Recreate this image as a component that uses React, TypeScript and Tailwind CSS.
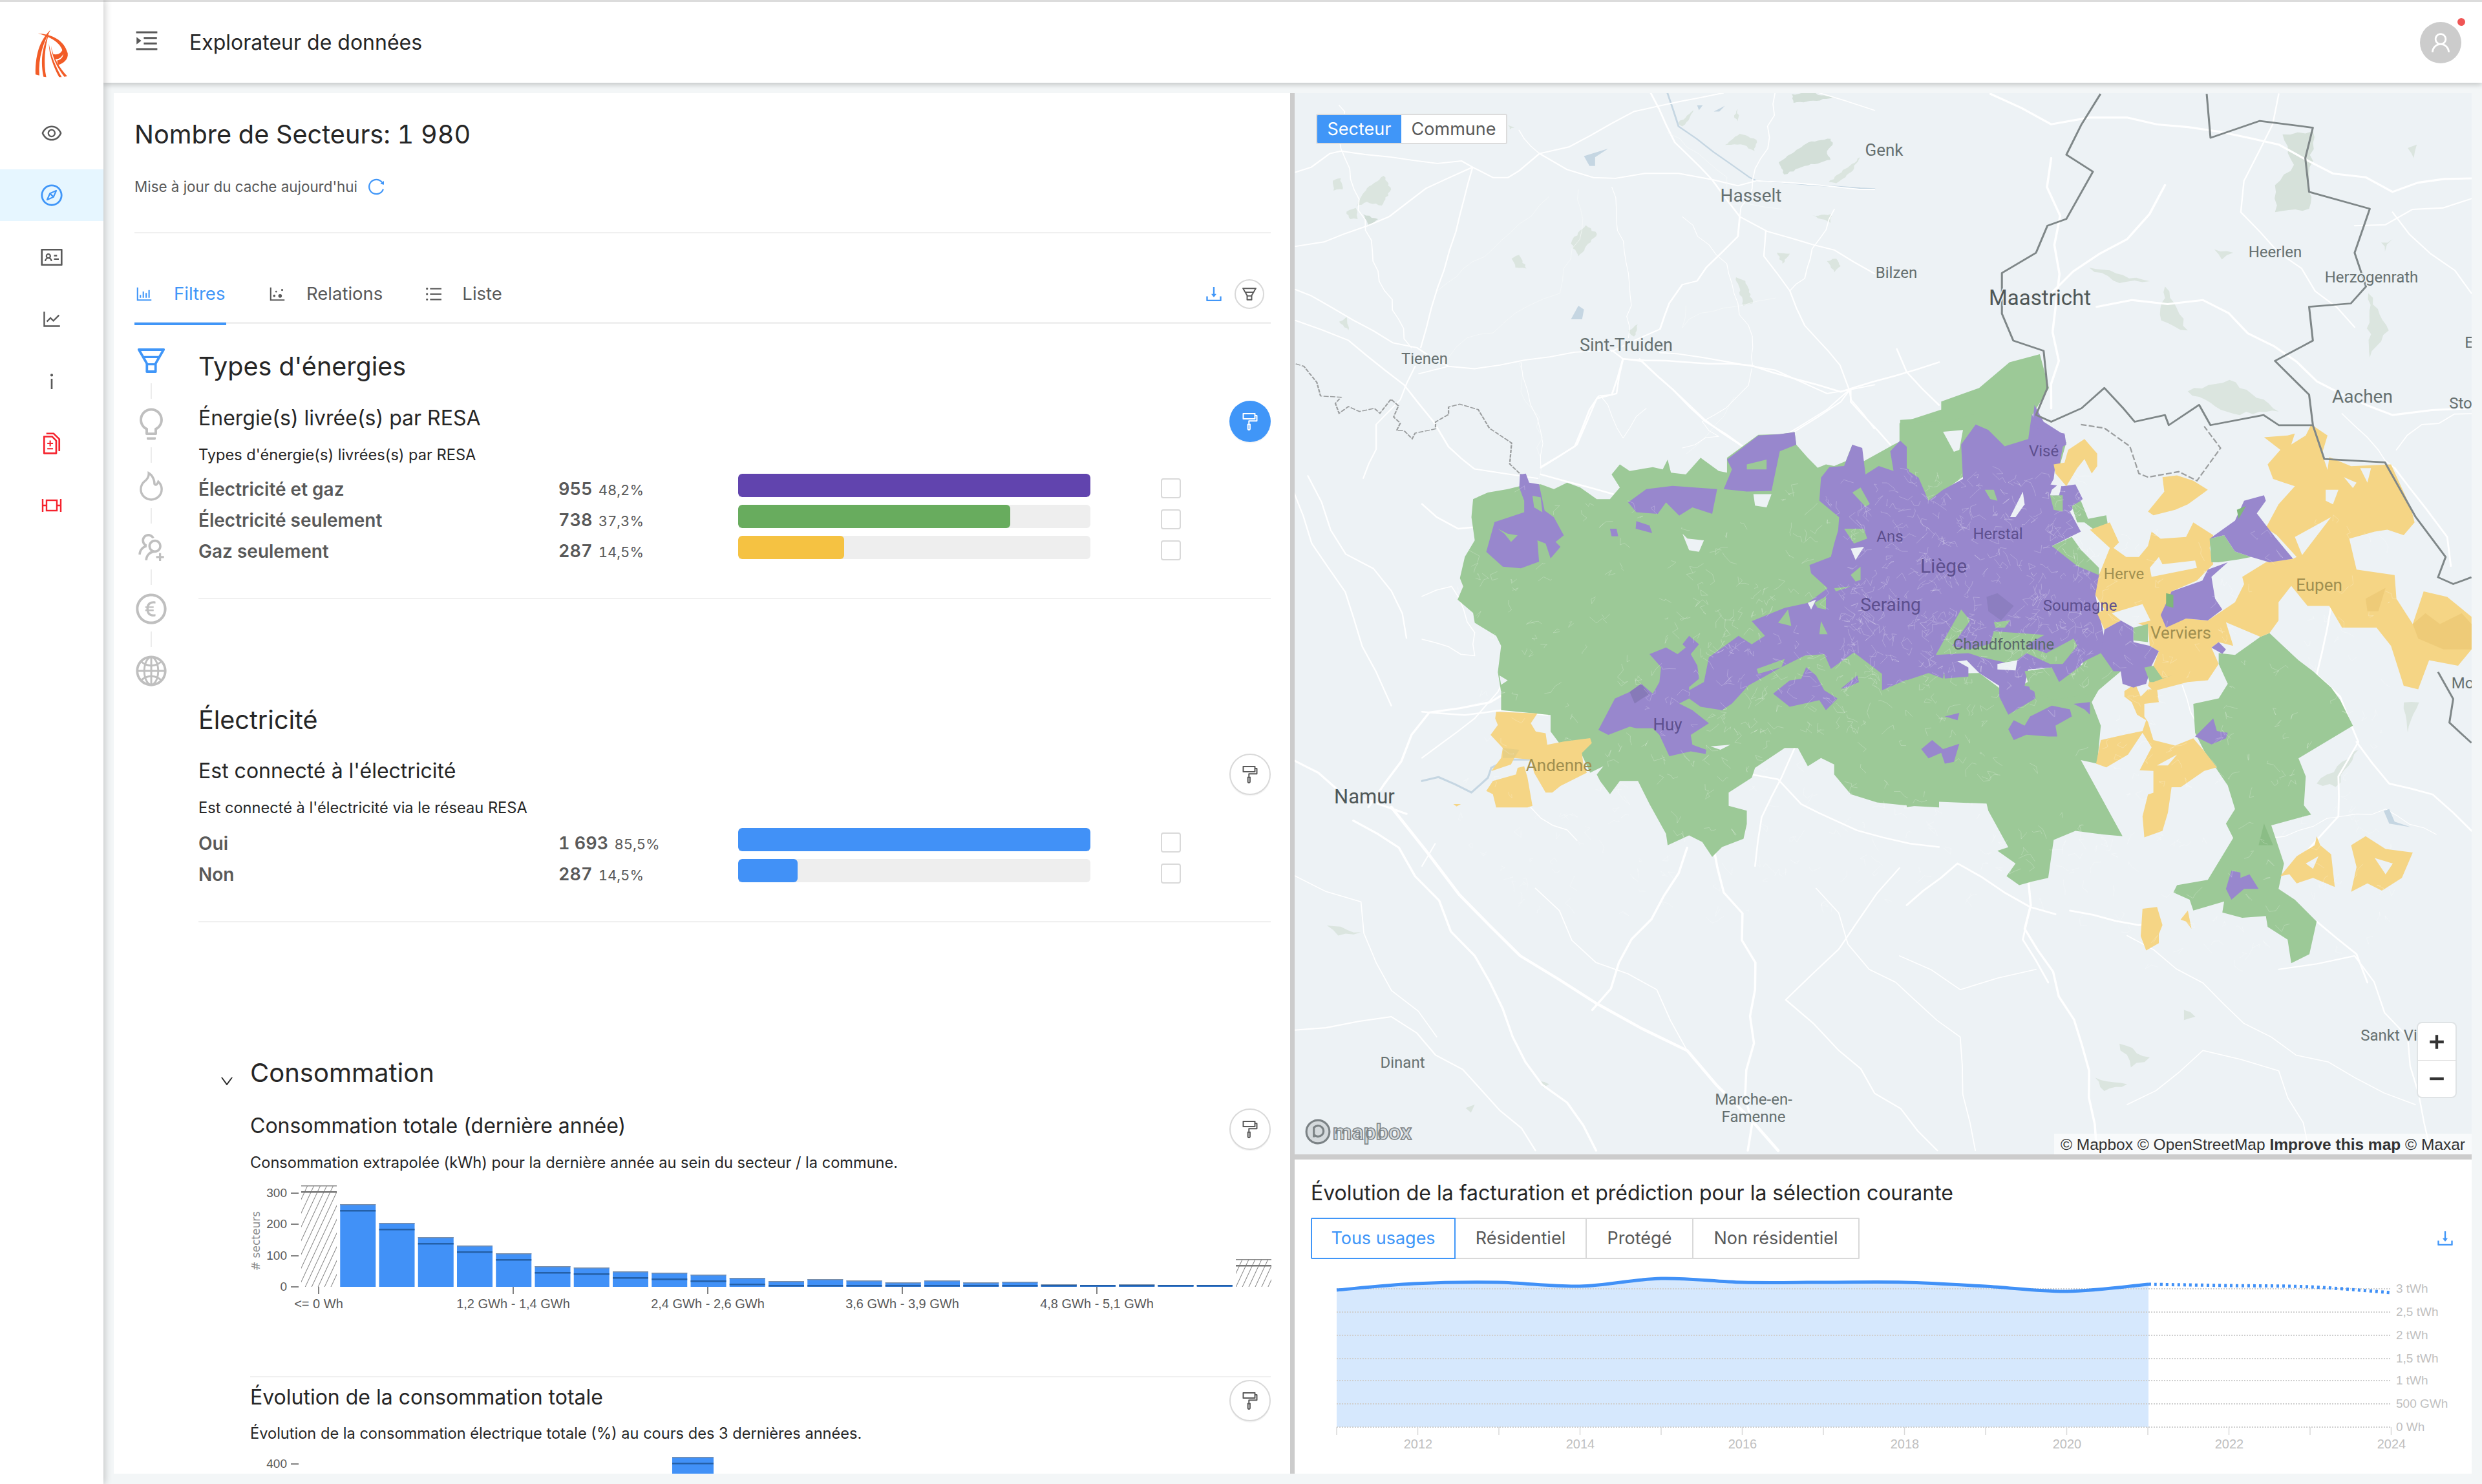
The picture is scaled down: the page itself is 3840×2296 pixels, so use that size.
import React from "react";
import {
  AiOutlineEye,
  AiOutlineCompass,
  AiOutlineIdcard,
  AiOutlineLineChart,
  AiOutlineInfo,
  AiOutlineDiff,
  AiOutlineMenuUnfold,
  AiOutlineUser,
  AiOutlineReload,
  AiOutlineBarChart,
  AiOutlineDotChart,
  AiOutlineUnorderedList,
  AiOutlineDownload,
  AiOutlineFunnelPlot,
  AiOutlineBulb,
  AiOutlineFire,
  AiOutlineUsergroupAdd,
  AiOutlineEuroCircle,
  AiOutlineGlobal,
  AiOutlineFormatPainter,
  AiOutlineDown,
} from "react-icons/ai";

const GREEN = "#9cc997";
const PURPLE = "#9887cd";
const YELLOW = "#f5d585";
const BG = "#edf2f5";

const Logo = () => (
  <svg viewBox="160 65 170 235" className="w-[57px] h-[78px]" fill="#f25c27">
    <path d="M238 72C198 110 166 170 168 280L186 284C180 200 205 130 238 72Z" />
    <path d="M232 85C205 140 188 200 205 290L218 292C205 230 210 150 232 85Z" />
    <path d="M180 88C240 92 300 115 318 180C322 210 300 225 275 235L268 215C290 210 300 195 296 175C285 130 240 105 180 88Z" />
    <path d="M230 135C232 190 250 240 278 292L290 292C260 240 240 190 230 135Z" />
    <path d="M240 145C250 200 280 250 316 288L302 290C270 250 245 200 240 145Z" />
    <path d="M250 185C280 190 290 175 296 160L300 175C295 200 270 215 255 205Z" />
  </svg>
);

const WidthIcon = () => (
  <svg viewBox="0 0 32 24" className="w-[32px] h-[24px]" fill="none" stroke="#f5222d" strokeWidth="2.4">
    <path d="M2 2V22M30 2V22M2 12H8M24 12H30" />
    <rect x="8" y="4" width="16" height="16" />
  </svg>
);

const Sidebar = () => (
  <aside className="w-[160px] shrink-0 bg-white border-t-[3px] border-[#dcdcdc] shadow-[3px_0_10px_rgba(0,0,0,0.18)] z-20 flex flex-col">
    <div className="flex justify-center pt-[41px]">
      <Logo />
    </div>
    <nav className="mt-[44px] flex flex-col gap-[16px] text-[#595959]">
      <div className="h-[80px] flex items-center justify-center"><AiOutlineEye size={36} /></div>
      <div className="h-[80px] flex items-center justify-center bg-[#e6f6ff] text-[#4096f8]"><AiOutlineCompass size={38} /></div>
      <div className="h-[80px] flex items-center justify-center"><AiOutlineIdcard size={38} /></div>
      <div className="h-[80px] flex items-center justify-center"><AiOutlineLineChart size={34} /></div>
      <div className="h-[80px] flex items-center justify-center"><AiOutlineInfo size={34} /></div>
      <div className="h-[80px] flex items-center justify-center text-[#f5222d]"><AiOutlineDiff size={38} /></div>
      <div className="h-[80px] flex items-center justify-center"><WidthIcon /></div>
    </nav>
  </aside>
);

const Header = () => (
  <header className="h-[128px] shrink-0 bg-white border-t-[3px] border-[#dcdcdc] shadow-[0_3px_8px_rgba(0,0,0,0.2)] z-10 flex items-center pl-[46px] pr-[32px]">
    <AiOutlineMenuUnfold size={42} className="text-[#595959] -mt-[6px]" />
    <span className="ml-[45px] text-[32px] leading-[40px] text-[#262626]">Explorateur de données</span>
    <div className="ml-auto relative w-[64px] h-[64px] rounded-full bg-[#cccccc] flex items-center justify-center">
      <AiOutlineUser size={38} className="text-white" />
      <span className="absolute top-[-6px] right-[-6px] w-[12px] h-[12px] rounded-full bg-[#f05555]" />
    </div>
  </header>
);

const PaintButton = ({ active }: { active?: boolean }) => (
  <div
    className={
      active
        ? "w-[64px] h-[64px] shrink-0 rounded-full bg-[#4096f8] text-white flex items-center justify-center shadow-[0_2px_0_rgba(0,0,0,0.04)]"
        : "w-[64px] h-[64px] shrink-0 rounded-full bg-white border-2 border-[#d9d9d9] text-[#595959] flex items-center justify-center shadow-[0_2px_0_rgba(0,0,0,0.04)]"
    }
  >
    <AiOutlineFormatPainter size={32} />
  </div>
);

type Row = { label: string; count: string; pct: string; width: number; color: string };

const BarRows = ({ rows }: { rows: Row[] }) => (
  <div className="flex flex-col gap-[12px]">
    {rows.map((r) => (
      <div key={r.label} className="flex h-[36px] items-start">
        <span className="w-[557px] pt-[6px] text-[28px] leading-[36px] font-semibold text-[#595959]">{r.label}</span>
        <span className="w-[278px] pt-[6px] text-[27px] leading-[36px] font-semibold text-[#595959] tabular-nums">
          {r.count} <span className="ml-[2px] text-[22px] font-normal">{r.pct}</span>
        </span>
        <div className="w-[545px] h-[36px] rounded-[6px] bg-[#eeeeee] overflow-hidden">
          <div className={`h-full rounded-[6px] ${r.color}`} style={{ width: r.width }} />
        </div>
        <div className="ml-[109px] mt-[7px] w-[31px] h-[31px] rounded-[4px] border-2 border-[#d9d9d9] bg-white" />
      </div>
    ))}
  </div>
);

const Stepper = () => {
  const items = [
    { icon: <AiOutlineBulb size={56} />, mt: "mt-[11px]" },
    { icon: <AiOutlineFire size={52} />, mt: "mt-[10px]" },
    { icon: <AiOutlineUsergroupAdd size={52} />, mt: "mt-[11px]" },
    { icon: <AiOutlineEuroCircle size={54} />, mt: "mt-[10px]" },
    { icon: <AiOutlineGlobal size={54} />, mt: "mt-[10px]" },
  ];
  return (
    <div className="w-[99px] shrink-0 pt-[30px] pl-[1px] flex flex-col items-start">
      <div className="w-[50px] flex flex-col items-center">
        <AiOutlineFunnelPlot size={54} className="text-[#4096f8]" />
        {items.map((it, i) => (
          <div key={i} className="flex flex-col items-center text-[#bfbfbf]">
            <div className="mt-[8px] w-[2px] h-[24px] bg-[#ececec]" />
            <div className={it.mt}>{it.icon}</div>
          </div>
        ))}
      </div>
    </div>
  );
};

// small stable noise, the map must come out the same on every render
const rnd = (i: number) => {
  const v = Math.sin(i * 12.9898) * 43758.5453;
  return v - Math.floor(v);
};

const pts = (s: number[]) => {
  const out: string[] = [];
  for (let i = 0; i < s.length; i += 2) out.push(s[i] + "," + s[i + 1]);
  return out.join(" ");
};

const wiggle = (c: number[], amp: number, step: number) => {
  const out: number[] = [c[0], c[1]];
  for (let i = 0; i < c.length - 2; i += 2) {
    const dx = c[i + 2] - c[i];
    const dy = c[i + 3] - c[i + 1];
    const len = Math.hypot(dx, dy) || 1;
    const n = Math.max(1, Math.round(len / step));
    for (let k = 1; k <= n; k++) {
      const t = k / n;
      const off = k === n ? 0 : (rnd(c[i] + c[i + 1] * 3 + k * 7) - 0.5) * amp * 2;
      out.push(c[i] + dx * t - (dy / len) * off, c[i + 1] + dy * t + (dx / len) * off);
    }
  }
  return out;
};

const P = ({ c, f }: { c: number[]; f: string }) => <polygon points={pts(c)} fill={f} />;
// wooded areas have a rough edge
const F = ({ c, f = "#dbe5df" }: { c: number[]; f?: string }) => {
  const closed = c.concat([c[0], c[1]]);
  return <polygon points={pts(wiggle(closed, 3, 9))} fill={f} />;
};
const L = ({ c, w = 5, col = "#ffffff" }: { c: number[]; w?: number; col?: string }) => (
  <polyline
    points={pts(w <= 3 ? wiggle(c, 9, 42) : wiggle(c, 2.5, 70))}
    fill="none"
    stroke={col}
    strokeWidth={w}
    strokeLinejoin="round"
    strokeLinecap="round"
  />
);

const speckles = (() => {
  let d = "";
  const zones = [
    [2250, 760, 1050, 660, 420],
    [2860, 730, 380, 330, 300],
    [2620, 900, 300, 240, 100],
    [3280, 800, 420, 700, 160],
  ];
  let s = 1;
  zones.forEach(([x, y, w, h, count]) => {
    for (let i = 0; i < count; i++) {
      let px = x + rnd(s++) * w;
      let py = y + rnd(s++) * h;
      d += `M${px.toFixed(1)} ${py.toFixed(1)}`;
      for (let k = 0; k < 3; k++) {
        px += (rnd(s++) - 0.5) * 22;
        py += (rnd(s++) - 0.5) * 22;
        d += `L${px.toFixed(1)} ${py.toFixed(1)}`;
      }
    }
  });
  return d;
})();

const MAP_LABELS: [string, number, number, number, boolean?][] = [
  ["Genk", 2915, 241, 26],
  ["Hasselt", 2709, 312, 28],
  ["Bilzen", 2934, 430, 24],
  ["Heerlen", 3520, 398, 24],
  ["Herzogenrath", 3669, 437, 24],
  ["Sint-Truiden", 2516, 543, 27],
  ["Tienen", 2204, 563, 24],
  ["Aachen", 3655, 623, 28],
  ["E", 3820, 538, 24],
  ["Sto", 3807, 632, 24],
  ["Mo", 3810, 1065, 24],
  ["Namur", 2111, 1243, 31, true],
  ["Dinant", 2170, 1652, 24],
  ["Marche-en-", 2713, 1709, 24],
  ["Famenne", 2713, 1736, 24],
  ["Sankt Vi", 3696, 1610, 24],
  ["Maastricht", 3156, 472, 33, true],
];

const ON_LABELS: [string, number, number, number, string][] = [
  ["Visé", 3162, 706, 24, "#5d4f8e"],
  ["Ans", 2924, 838, 24, "#5d4f8e"],
  ["Herstal", 3091, 834, 24, "#5d4f8e"],
  ["Liège", 3007, 886, 30, "#5d4f8e"],
  ["Seraing", 2925, 945, 28, "#5d4f8e"],
  ["Soumagne", 3218, 945, 24, "#5d4f8e"],
  ["Chaudfontaine", 3100, 1005, 24, "#5a6a6a"],
  ["Herve", 3286, 896, 24, "#a08f50"],
  ["Verviers", 3374, 988, 26, "#a08f50"],
  ["Eupen", 3588, 914, 26, "#a08f50"],
  ["Huy", 2580, 1130, 26, "#5d4f8e"],
  ["Andenne", 2412, 1193, 26, "#a08f50"],
];

const MapDrawing = () => (
  <svg viewBox="2003 144 1821 1642" className="absolute inset-0 w-full h-full block" style={{ background: BG }}>
    {/* forests and water */}
    <g transform="translate(2000 140) scale(0.574 0.3827)">
      <F c={[1310, 290, 1390, 210, 1450, 195, 1455, 220, 1440, 245, 1450, 280, 1380, 305, 1325, 340]} f="#d3dfd8" />
      <F c={[1345, 15, 1400, 10, 1465, 30, 1350, 50]} f="#d3dfd8" />
      <F c={[1165, 220, 1205, 175, 1250, 200, 1245, 245, 1215, 220]} />
      <F c={[1445, 370, 1530, 270, 1505, 330, 1465, 375]} />
      <F c={[170, 470, 200, 395, 245, 345, 265, 400, 240, 465, 200, 450]} />
      <F c={[145, 490, 170, 475, 175, 520, 155, 520]} />
      <F c={[190, 500, 230, 520, 205, 545]} f="#cfdcd5" />
      <F c={[108, 365, 130, 355, 135, 400, 110, 405]} />
      <F c={[755, 600, 790, 545, 820, 580, 770, 670, 750, 620]} />
      <F c={[590, 680, 610, 665, 630, 720, 600, 715]} />
      <F c={[1195, 755, 1220, 770, 1240, 860, 1215, 870]} />
      <F c={[1305, 655, 1340, 660, 1320, 700]} />
      <F c={[1440, 690, 1465, 680, 1477, 710, 1460, 735]} />
      <F c={[1400, 505, 1450, 500, 1450, 535, 1425, 520]} />
      <F c={[580, 140, 598, 150, 585, 158]} />
      <F c={[1190, 110, 1200, 75, 1200, 125]} />
      <F c={[1040, 130, 1080, 80, 1070, 110, 1050, 145]} />
      <F c={[905, 970, 930, 945, 920, 995]} />
      <F c={[125, 935, 145, 915, 150, 970]} />
      <P f="#c5d6e2" c={[785, 265, 850, 235, 815, 270, 815, 305, 800, 305]} />
      <P f="#c5d6e2" c={[750, 925, 770, 870, 785, 885, 780, 925]} />
      <P f="#c5d6e2" c={[1090, 60, 1105, 60, 1095, 80]} />
      <P f="#c5d6e2" c={[1135, 85, 1165, 62, 1150, 85]} />
    </g>
    <g transform="translate(2000 140) scale(1.1735 1.046)">
      <F c={[1295, 180, 1340, 175, 1345, 60, 1305, 65, 1320, 110, 1295, 140]} f="#d6e1da" />
      <F c={[1050, 262, 1130, 282, 1090, 285]} />
      <F c={[1150, 290, 1180, 355, 1145, 340]} />
      <F c={[1235, 428, 1300, 475, 1240, 478, 1180, 445]} />
      <F c={[1418, 300, 1445, 355, 1420, 395]} />
      <F c={[1465, 905, 1485, 905, 1470, 950]} />
      <F c={[1350, 1025, 1405, 975, 1375, 1030]} />
      <F c={[45, 1235, 90, 1245, 60, 1250]} />
      <F c={[1090, 1410, 1130, 1430, 1105, 1445]} />
      <F c={[1058, 1460, 1100, 1470, 1070, 1480]} />
      <F c={[1215, 235, 1240, 240, 1225, 250]} />
      <F c={[1435, 225, 1450, 220, 1440, 238]} />
      <F c={[1470, 85, 1482, 80, 1478, 100]} />
      <F c={[1175, 1360, 1190, 1370, 1175, 1375]} />
      <F c={[325, 1465, 338, 1470, 330, 1475]} />
      <F c={[228, 1505, 240, 1500, 235, 1512]} />
    </g>
    {/* roads: north west */}
    <g transform="translate(2000 140) scale(0.574 0.3827)">
      <L w={5} col="#c5d6e2" c={[1010, 10, 1040, 145, 1230, 350, 1250, 365, 1530, 395, 1568, 398]} />
      <L c={[8, 330, 50, 310, 100, 255, 130, 245, 390, 295, 455, 285, 485, 310, 540, 352, 580, 352, 610, 325, 665, 255, 745, 228, 920, 85, 1160, 10]} />
      <L c={[665, 255, 740, 320, 810, 352, 870, 355, 950, 335, 1040, 335, 1130, 360, 1200, 385, 1250, 365, 1400, 380, 1530, 400, 1568, 400]} />
      <L c={[8, 630, 85, 612, 200, 548, 260, 510, 360, 395, 485, 310]} />
      <L w={4} c={[485, 310, 440, 570, 390, 800, 345, 1040]} />
      <L c={[8, 930, 150, 1010, 300, 1190, 380, 1340, 420, 1440, 490, 1530, 660, 1568]} />
      <L c={[8, 805, 50, 830, 270, 1020, 335, 1040, 380, 1085, 420, 1115, 490, 1125, 760, 1058, 860, 1050, 890, 1085, 940, 1095, 1110, 1330, 1240, 1470]} />
      <L w={4} c={[340, 1145, 420, 1115]} />
      <L w={4} c={[330, 1115, 290, 1250, 225, 1350, 225, 1450, 190, 1568]} />
      <L c={[860, 1055, 990, 965, 1015, 860, 1050, 785, 1090, 770, 1115, 715, 1200, 590, 1205, 510, 1130, 360, 1030, 210, 965, 10]} />
      <L c={[1205, 510, 1280, 570, 1460, 645, 1568, 740]} />
      <L c={[1240, 1115, 1040, 1065, 990, 1060]} />
      <L c={[1240, 1115, 1300, 1130, 1440, 1225, 1500, 1210, 1568, 1190]} />
      <L w={4} c={[1500, 1210, 1475, 1110, 1380, 950, 1340, 810, 1270, 670, 1275, 570]} />
      <L w={4} c={[1500, 1210, 1505, 1250, 1568, 1368]} />
      <L w={4} c={[1500, 1210, 1440, 1290, 1320, 1400, 1240, 1470]} />
      <L c={[670, 1520, 760, 1440, 800, 1290, 825, 1235, 860, 1230, 890, 1085]} />
      <L w={3} c={[1300, 10, 1285, 190, 1240, 360, 1205, 510]} />
      <L w={4} c={[1420, 10, 1568, 80]} />
      <L w={3} c={[1460, 480, 1400, 640, 1380, 760, 1340, 810]} />
      <L w={3} c={[610, 160, 665, 255]} />
      <L w={3} c={[125, 60, 140, 85, 130, 235, 230, 730, 320, 1040]} />
      <L w={2} c={[860, 390, 905, 740, 905, 1000]} />
      <L w={2} c={[1050, 510, 1170, 700, 1200, 860, 1240, 1040, 1240, 1115]} />
      <L w={1.5} col="#f7f9fa" c={[770, 400, 780, 560, 730, 720, 720, 820, 600, 900, 540, 980, 470, 1000, 420, 1080]} />
      <L w={1.5} col="#f7f9fa" c={[690, 430, 610, 540, 540, 640, 460, 720, 390, 810]} />
      <L w={1.5} col="#f7f9fa" c={[1010, 170, 1170, 350, 1180, 460, 1320, 480]} />
      <L w={1.5} col="#f7f9fa" c={[1060, 870, 1050, 960, 1100, 900, 1160, 880, 1300, 840]} />
      <L w={1.5} col="#f7f9fa" c={[610, 1100, 615, 1220, 665, 1320, 665, 1568]} />
      <L w={1.5} col="#f7f9fa" c={[1190, 1240, 1140, 1350, 1060, 1470]} />
    </g>
    {/* roads: centre and south */}
    <g transform="translate(2200 540) scale(0.5102)">
      <L c={[1130, 1210, 1090, 1300, 1030, 1420, 1010, 1568]} />
      <L c={[1000, 1290, 1080, 1305, 1150, 1380, 1320, 1460, 1480, 1500, 1568, 1510]} />
      <L c={[0, 1100, 130, 1110, 240, 1095, 380, 1110]} />
      <L w={4} c={[0, 1240, 160, 1120, 230, 1040, 270, 960]} />
      <L w={3} c={[0, 750, 90, 720, 160, 860, 160, 930, 0, 880]} />
      <L w={5} c={[0, 470, 45, 510, 110, 545, 160, 540]} />
      <L w={5} c={[360, 380, 580, 440]} />
      <L w={5} c={[360, 360, 470, 290, 530, 150, 590, 135, 610, 30, 1000, 50, 1060, 70, 1270, 130, 1300, 120, 1568, 40]} />
      <L w={5} c={[660, 30, 860, 220, 980, 300]} />
      <L w={4} c={[1300, 120, 1270, 160, 1130, 250]} />
      <L w={5} c={[1300, 120, 1300, 160, 1420, 290]} />
      <L w={5} c={[1440, 0, 1470, 70, 1568, 170]} />
      <L w={6} col="#c5d6e2" c={[0, 1310, 50, 1298, 100, 1320, 150, 1345, 200, 1300, 210, 1270, 260, 1245, 330, 1245]} />
      <L w={4} c={[0, 1568, 40, 1500]} />
      <L w={3} c={[470, 1490, 330, 1390]} />
      <L w={2} c={[300, 40, 360, 250, 360, 360]} />
      <L w={2} c={[540, 140, 610, 270, 680, 180]} />
      <L w={2} c={[850, 220, 900, 265, 790, 300]} />
      <L w={2} c={[1000, 60, 990, 110, 950, 150, 850, 220]} />
    </g>
    <g transform="translate(2000 140) scale(1.1735 1.046)">
      <L w={4} c={[130, 1060, 220, 1190, 300, 1280, 400, 1350, 520, 1420, 640, 1568]} />
      <L w={3} c={[100, 1060, 180, 920, 260, 905, 275, 895]} />
      <L w={3} c={[0, 990, 100, 1050, 150, 1070]} />
      <L w={2} c={[20, 570, 50, 650, 130, 740, 150, 810]} />
      <L w={3} c={[80, 1080, 140, 1120, 240, 1280, 290, 1400, 400, 1568]} />
      <L w={3} c={[600, 1568, 610, 1290, 560, 1150, 555, 1120]} />
      <L w={3} c={[970, 1170, 965, 1240, 1010, 1340, 1050, 1450, 1060, 1568]} />
      <L w={3} c={[520, 1120, 430, 1290, 395, 1360]} />
      <L w={2} c={[800, 1150, 720, 1270, 650, 1345, 720, 1420, 850, 1568]} />
      <L w={2} c={[0, 590, 110, 860, 130, 910]} />
      <L w={2} c={[1300, 1300, 1400, 1280, 1470, 1400, 1500, 1568]} />
      <L w={3} c={[920, 5, 1000, 50, 1050, 40, 1100, 40, 1300, 80, 1450, 150, 1554, 130]} />
      <L w={3} c={[1000, 100, 1010, 400, 1000, 470]} />
      <L w={3} c={[1060, 320, 1200, 310, 1350, 430, 1450, 480, 1554, 470]} />
      <L w={2} c={[1300, 5, 1250, 180, 1300, 240, 1400, 350]} />
      <L w={2} c={[1400, 200, 1554, 160]} />
      <L w={2} c={[1450, 180, 1554, 300]} />
      <L w={3} c={[1000, 300, 1100, 220, 1150, 140]} />
      <L w={2} c={[130, 1370, 250, 1480, 320, 1568]} />
      <L w={2} c={[0, 1390, 130, 1370]} />
      <L w={1.5} c={[690, 1180, 760, 1300, 880, 1400, 900, 1568]} />
      <L w={1.5} c={[320, 1180, 400, 1290, 480, 1330, 520, 1420]} />
      <L w={1.5} c={[0, 1160, 90, 1200, 110, 1290, 190, 1400]} />
      <L w={1.5} c={[800, 1280, 880, 1330, 980, 1300]} />
      <L w={1.5} c={[1100, 1250, 1200, 1320, 1290, 1400, 1400, 1460, 1480, 1500]} />
      <L w={1.5} c={[1100, 1500, 1200, 1420, 1300, 1450, 1340, 1568]} />
    </g>
    <g transform="translate(2950 640) scale(0.5612)">
      <L c={[1170, 530, 1130, 720, 1195, 780, 1245, 905, 1190, 1000, 1190, 1110, 1100, 1210]} />
      <L c={[1240, 905, 1330, 1020, 1450, 1050, 1557, 1150]} />
      <L c={[450, 1370, 640, 1410, 700, 1400]} />
      <L c={[410, 1380, 340, 1360, 140, 1240, 0, 1355]} />
      <L c={[340, 1360, 320, 1450, 390, 1568]} />
      <L c={[1130, 1400, 1240, 1490, 1270, 1568]} />
      <L c={[1345, 150, 1430, 260, 1490, 340, 1500, 420]} />
      <L w={3} c={[1200, 0, 1300, 100, 1345, 150]} />
      <L w={3} c={[1350, 100, 1420, 30, 1557, 0]} />
      <L w={3} c={[760, 750, 820, 930, 900, 1050]} />
      <L w={2} c={[1000, 1170, 1200, 1110, 1320, 1090, 1460, 1160]} />
      <P f="#c5d6e2" c={[1315, 1095, 1330, 1090, 1345, 1125, 1390, 1140, 1330, 1130]} />
    </g>
    {/* dashed region border */}
    <g transform="translate(2000 140) scale(0.574 0.3827)" fill="none" stroke="#9b9e9f" strokeWidth="4" strokeDasharray="14 4">
      <polyline points={pts([8, 1105, 30, 1115, 65, 1180, 75, 1235, 130, 1240, 115, 1265, 125, 1305, 150, 1278, 180, 1298, 220, 1285, 235, 1305, 265, 1248, 285, 1275, 272, 1320, 290, 1345, 280, 1375, 300, 1375, 322, 1408, 330, 1385, 385, 1368, 385, 1340, 420, 1310, 420, 1280, 450, 1268, 500, 1290, 530, 1365, 590, 1425, 585, 1510, 620, 1560])} />
    </g>
    <g transform="translate(2950 640) scale(0.5612)" fill="none" stroke="#9b9e9f" strokeWidth="4" strokeDasharray="16 6">
      <polyline points={pts([480, 30, 545, 40, 615, 90, 640, 165, 665, 175, 750, 160, 800, 185, 865, 95, 820, 35])} />
    </g>
    {/* north tip, towards Maastricht */}
    <g transform="translate(2000 140) scale(1.1735 1.046)">
      <P f={GREEN} c={[800, 492, 855, 472, 855, 460, 905, 440, 945, 402, 985, 390, 997, 440, 975, 480, 975, 520, 1020, 520, 1010, 560, 900, 570, 800, 570]} />
      <P f={BG} c={[858, 502, 885, 500, 885, 532, 865, 530]} />
      <P f={PURPLE} c={[890, 520, 900, 480, 920, 520, 972, 522, 978, 465, 990, 490, 1018, 510, 1010, 560, 890, 570]} />
    </g>
    {/* west part of the zones */}
    <g transform="translate(2200 540) scale(0.5102)">
      <P f={GREEN} c={[155, 455, 200, 435, 260, 425, 300, 415, 360, 410, 400, 425, 440, 405, 480, 420, 530, 455, 570, 455, 600, 420, 575, 380, 600, 350, 630, 370, 700, 358, 730, 365, 745, 335, 755, 375, 800, 380, 845, 330, 900, 370, 925, 375, 925, 330, 1020, 260, 1085, 258, 1130, 252, 1135, 290, 1170, 330, 1200, 360, 1225, 350, 1250, 355, 1285, 340, 1305, 290, 1340, 340, 1430, 290, 1450, 280, 1450, 215, 1520, 210, 1568, 190, 1568, 1390, 1480, 1385, 1380, 1375, 1300, 1350, 1250, 1290, 1250, 1260, 1210, 1240, 1170, 1265, 1140, 1210, 1100, 1210, 1010, 1270, 1000, 1300, 930, 1345, 930, 1385, 985, 1400, 985, 1440, 975, 1485, 910, 1510, 880, 1540, 850, 1495, 810, 1475, 745, 1505, 740, 1470, 690, 1380, 655, 1310, 600, 1310, 570, 1350, 540, 1310, 530, 1290, 550, 1265, 510, 1285, 480, 1220, 420, 1200, 390, 1160, 390, 1110, 240, 1095, 240, 1040, 230, 980, 240, 900, 225, 870, 160, 830, 155, 800, 108, 760, 125, 720, 115, 695, 130, 630, 160, 580, 150, 510]} />
      <P f={BG} c={[790, 560, 805, 575, 855, 580, 840, 615, 810, 610]} />
      <P f={BG} c={[1005, 440, 1060, 440, 1045, 480, 1010, 475]} />
      <P f={BG} c={[875, 1205, 935, 1200, 905, 1215]} />
      <P f={BG} c={[235, 990, 260, 1005, 240, 1018]} />
      <P f={PURPLE} c={[297, 380, 315, 378, 325, 405, 355, 410, 372, 490, 400, 510, 430, 565, 405, 585, 420, 600, 390, 635, 375, 590, 350, 580, 355, 645, 300, 665, 245, 660, 195, 615, 220, 525, 310, 495, 310, 460, 295, 420]} />
      <P f={GREEN} c={[230, 545, 260, 560, 290, 565, 270, 585, 250, 560]} />
      <P f={GREEN} c={[335, 445, 360, 450, 365, 495, 340, 480]} />
      <P f={PURPLE} c={[625, 465, 680, 425, 760, 415, 895, 425, 880, 500, 820, 480, 780, 505, 740, 465, 715, 500, 650, 495]} />
      <P f={PURPLE} c={[915, 425, 940, 365, 925, 335, 1020, 262, 1085, 258, 1130, 252, 1135, 290, 1085, 310, 1060, 430, 985, 432]} />
      <P f={GREEN} c={[985, 350, 1045, 335, 1045, 365, 985, 365]} />
      <P f={PURPLE} c={[570, 545, 590, 545, 595, 568, 575, 568]} />
      <P f={PURPLE} c={[650, 522, 690, 535, 698, 558, 648, 545]} />
      <P f={PURPLE} c={[1210, 390, 1235, 358, 1280, 355, 1305, 290, 1335, 300, 1345, 380, 1385, 355, 1430, 370, 1420, 310, 1450, 278, 1485, 310, 1490, 350, 1475, 370, 1568, 430, 1568, 975, 1500, 990, 1395, 1035, 1395, 985, 1310, 920, 1240, 970, 1220, 925, 1160, 930, 1090, 965, 990, 1020, 940, 1075, 910, 1095, 845, 1085, 810, 1060, 810, 1035, 855, 1010, 870, 935, 960, 870, 1000, 895, 1040, 870, 1000, 825, 1100, 785, 1170, 770, 1230, 725, 1180, 680, 1175, 655, 1240, 630, 1250, 590, 1262, 550, 1265, 510, 1205, 460]} />
      <P f={GREEN} c={[1305, 435, 1330, 420, 1358, 470, 1345, 478]} />
      <P f={GREEN} c={[1190, 770, 1225, 750, 1225, 790, 1200, 785]} />
      <P f={GREEN} c={[1080, 830, 1110, 790, 1120, 840]} />
      <P f={GREEN} c={[1210, 825, 1230, 865, 1205, 865]} />
      <P f={GREEN} c={[1015, 970, 1100, 940, 1090, 965, 1020, 985]} />
      <P f={GREEN} c={[1280, 545, 1340, 545, 1350, 575, 1310, 590]} />
      <P f={GREEN} c={[1300, 685, 1330, 660, 1330, 700, 1315, 705]} />
      <P f={GREEN} c={[1250, 725, 1300, 720, 1255, 735]} />
      <P f={BG} c={[1300, 605, 1340, 600, 1315, 640]} />
      <P f={BG} c={[1170, 770, 1195, 760, 1180, 790]} />
      <P f={PURPLE} c={[535, 1155, 585, 1060, 630, 1040, 665, 1015, 700, 1045, 720, 1010, 725, 965, 690, 925, 740, 905, 775, 925, 800, 905, 790, 895, 810, 870, 840, 895, 815, 925, 835, 960, 840, 1000, 810, 1025, 810, 1060, 780, 1075, 820, 1095, 870, 1135, 815, 1170, 820, 1200, 862, 1215, 860, 1228, 815, 1220, 750, 1235, 720, 1170, 700, 1150, 650, 1150, 630, 1145, 565, 1170]} />
      <P f={PURPLE} c={[1065, 1045, 1115, 1005, 1150, 1000, 1165, 965, 1195, 990, 1220, 1035, 1260, 1060, 1225, 1095, 1205, 1065, 1115, 1085]} />
      <P f={PURPLE} c={[1270, 1030, 1320, 990, 1325, 1010, 1285, 1028]} />
      <P f={PURPLE} c={[1515, 1215, 1540, 1185, 1568, 1210, 1568, 1230, 1535, 1240]} />
      <P f="#877ab8" c={[630, 1040, 665, 1015, 690, 1045, 645, 1075]} />
      <P f={YELLOW} c={[225, 1100, 350, 1105, 330, 1135, 345, 1160, 375, 1165, 380, 1200, 430, 1190, 510, 1180, 515, 1195, 485, 1225, 490, 1265, 500, 1285, 420, 1325, 395, 1345, 375, 1345, 340, 1285, 330, 1245, 280, 1240, 270, 1260, 210, 1280, 240, 1240, 245, 1210, 208, 1170, 230, 1140, 222, 1120]} />
      <P f={YELLOW} c={[290, 1270, 310, 1265, 320, 1300, 335, 1385, 320, 1390, 225, 1390, 215, 1350, 195, 1340, 215, 1310, 285, 1290]} />
      <P f={YELLOW} c={[95, 1380, 118, 1380, 105, 1387]} />
      <P f="#e8cf84" c={[245, 1210, 295, 1215, 280, 1240, 245, 1240]} />
    </g>
    {/* east part of the zones */}
    <g transform="translate(2950 640) scale(0.5612)">
      <P f={GREEN} c={[0, 720, 200, 715, 260, 760, 325, 745, 400, 700, 475, 720, 500, 640, 545, 630, 590, 710, 530, 760, 510, 795, 535, 860, 525, 965, 480, 955, 595, 1165, 540, 1160, 465, 1150, 405, 1175, 390, 1280, 345, 1290, 310, 1300, 275, 1275, 300, 1240, 250, 1205, 280, 1195, 225, 1095, 220, 1075, 90, 1070, 0, 1085]} />
      <P f={GREEN} c={[0, 25, 125, 20, 190, 0, 335, 0, 335, 80, 160, 170, 100, 215, 60, 240, 30, 170, 0, 150]} />
      <P f={BG} c={[100, 50, 155, 45, 145, 100, 130, 105]} />
      <P f={PURPLE} c={[0, 165, 20, 190, 60, 240, 100, 210, 155, 180, 150, 85, 190, 30, 225, 45, 270, 90, 335, 70, 345, 0, 360, 40, 435, 55, 440, 85, 415, 100, 405, 180, 380, 225, 395, 195, 430, 200, 465, 195, 485, 235, 450, 270, 480, 325, 450, 340, 400, 365, 460, 400, 535, 445, 520, 500, 545, 620, 535, 660, 495, 680, 480, 690, 475, 725, 400, 745, 400, 700, 335, 705, 325, 750, 350, 755, 355, 785, 280, 830, 255, 780, 255, 750, 200, 715, 165, 680, 140, 683, 105, 700, 100, 730, 60, 715, 0, 735]} />
      <P f={GREEN} c={[215, 210, 240, 210, 250, 240, 230, 235]} />
      <P f={GREEN} c={[395, 225, 430, 225, 430, 270, 405, 265]} />
      <P f={GREEN} c={[455, 255, 480, 240, 500, 290, 550, 280, 555, 310, 530, 330, 490, 300, 470, 300]} />
      <P f={GREEN} c={[400, 365, 455, 340, 480, 375, 530, 425, 530, 445, 470, 420]} />
      <P f={GREEN} c={[80, 665, 130, 575, 150, 540, 175, 570, 125, 640, 170, 650, 230, 635, 240, 600, 380, 610, 325, 640, 385, 660, 460, 620, 470, 640, 430, 690, 395, 690, 330, 660, 290, 690, 200, 670, 170, 660]} />
      <P f={GREEN} c={[240, 575, 285, 570, 270, 590, 245, 590]} />
      <P f={GREEN} c={[325, 710, 400, 700, 420, 740, 500, 680, 540, 660, 590, 710, 520, 770, 400, 790, 340, 760]} />
      <P f={BG} c={[285, 285, 320, 215, 325, 250, 300, 285]} />
      <P f={BG} c={[250, 690, 305, 680, 300, 708, 250, 705]} />
      <P f={BG} c={[400, 210, 430, 185, 420, 225, 395, 225]} />
      <P f="#8c7ec0" c={[220, 505, 250, 495, 295, 530, 260, 570, 225, 545]} />
      <P f={PURPLE} c={[102, 700, 140, 683, 170, 700, 170, 725, 105, 730]} />
      <P f={PURPLE} c={[280, 870, 295, 845, 325, 860, 340, 835, 400, 805, 450, 815, 455, 835, 410, 860, 415, 890, 390, 890, 330, 885, 295, 900]} />
      <P f={PURPLE} c={[40, 925, 70, 900, 100, 925, 145, 910, 130, 960, 105, 965, 95, 935, 60, 950]} />
      <P f={PURPLE} c={[460, 800, 505, 795, 505, 830, 490, 815]} />
      <P f={PURPLE} c={[105, 835, 145, 825, 140, 845]} />
      <P f={GREEN} c={[860, 660, 905, 665, 975, 615, 1000, 605, 1080, 680, 1120, 710, 1170, 755, 1195, 790, 1230, 860, 1080, 950, 1100, 1000, 1095, 1080, 1115, 1105, 1005, 1135, 1040, 1240, 1025, 1310, 1070, 1340, 1130, 1400, 1110, 1490, 1060, 1515, 1050, 1450, 995, 1415, 990, 1385, 925, 1390, 870, 1375, 875, 1345, 790, 1370, 780, 1340, 735, 1320, 745, 1300, 830, 1285, 900, 1170, 880, 1130, 905, 1090, 885, 1025, 820, 930, 795, 880, 790, 800, 860, 785, 885, 745, 860, 690]} />
      <P f="#8bbd86" c={[970, 1190, 985, 1130, 1010, 1190]} />
      <P f={YELLOW} c={[505, 320, 560, 300, 585, 355, 570, 370, 605, 395, 640, 395, 665, 365, 675, 325, 700, 345, 770, 340, 790, 300, 845, 335, 835, 370, 845, 415, 830, 430, 800, 460, 730, 490, 705, 555, 720, 585, 770, 565, 830, 570, 868, 545, 905, 520, 930, 470, 925, 450, 990, 410, 1065, 400, 1075, 395, 1020, 335, 990, 315, 1025, 250, 1070, 200, 1040, 190, 1010, 180, 995, 140, 1030, 100, 985, 65, 1050, 60, 1070, 55, 1060, 85, 1100, 60, 1115, 30, 1160, 60, 1145, 110, 1160, 155, 1165, 120, 1225, 145, 1335, 140, 1390, 260, 1400, 300, 1370, 335, 1325, 320, 1290, 325, 1220, 345, 1240, 430, 1345, 445, 1350, 510, 1395, 580, 1425, 490, 1490, 505, 1557, 560, 1557, 650, 1520, 695, 1440, 680, 1410, 760, 1370, 750, 1335, 640, 1295, 590, 1200, 590, 1165, 530, 1105, 530, 1060, 475, 1025, 520, 1025, 570, 1000, 605, 975, 615, 880, 575, 900, 640, 860, 630, 840, 645, 860, 690, 830, 735, 775, 740, 680, 765, 665, 750, 680, 695, 695, 655, 670, 640, 665, 590, 620, 570, 590, 570, 545, 595, 525, 550, 545, 540, 520, 500, 530, 445, 560, 370]} />
      <P f={BG} c={[565, 550, 650, 525, 672, 570, 625, 582, 590, 570]} />
      <P f={BG} c={[675, 450, 800, 425, 795, 405, 705, 415, 695, 395, 670, 425]} />
      <P f={BG} c={[1070, 340, 1170, 285, 1090, 390]} />
      <P f={BG} c={[1155, 210, 1190, 210, 1175, 250, 1155, 240]} />
      <P f={BG} c={[1205, 175, 1240, 190, 1230, 205]} />
      <P f={BG} c={[1250, 150, 1280, 150, 1270, 190]} />
      <P f="#eecb78" c={[1395, 580, 1430, 550, 1470, 580, 1530, 550, 1557, 580, 1557, 650, 1480, 650, 1410, 620]} />
      <P f="#eecb78" c={[1265, 510, 1320, 480, 1300, 545, 1270, 545]} />
      <P f={YELLOW} c={[405, 140, 435, 135, 445, 100, 490, 70, 525, 110, 525, 145, 510, 165, 490, 125, 470, 150, 440, 200, 410, 165]} />
      <P f={YELLOW} c={[665, 270, 710, 215, 705, 175, 745, 170, 790, 185, 830, 210, 775, 250, 740, 265, 680, 280]} />
      <P f={YELLOW} c={[600, 765, 630, 745, 645, 780, 665, 760, 690, 760, 695, 795, 655, 800, 655, 835, 665, 850, 680, 900, 740, 915, 790, 895, 820, 930, 855, 975, 820, 985, 755, 1030, 730, 1030, 720, 1100, 705, 1150, 655, 1168, 650, 1110, 665, 1050, 680, 1045, 680, 985, 642, 983, 675, 920, 650, 880, 610, 940, 550, 975, 522, 965, 535, 900, 600, 885, 650, 875, 660, 845, 635, 830, 620, 795, 600, 780]} />
      <P f={BG} c={[690, 970, 745, 940, 720, 970]} />
      <P f={YELLOW} c={[1030, 1275, 1075, 1220, 1125, 1190, 1130, 1165, 1140, 1190, 1170, 1215, 1180, 1305, 1120, 1280, 1075, 1295, 1055, 1270]} />
      <P f={YELLOW} c={[1225, 1190, 1265, 1165, 1320, 1200, 1395, 1210, 1365, 1280, 1310, 1315, 1270, 1295, 1225, 1318, 1240, 1250]} />
      <P f={BG} c={[1100, 1240, 1135, 1220, 1120, 1255]} />
      <P f={BG} c={[1290, 1225, 1340, 1240, 1320, 1270]} />
      <P f={YELLOW} c={[650, 1365, 690, 1360, 705, 1410, 695, 1435, 695, 1460, 660, 1480, 645, 1440]} />
      <P f={YELLOW} c={[755, 1395, 775, 1370, 785, 1420, 770, 1400]} />
      <P f={PURPLE} c={[540, 630, 545, 595, 590, 570, 625, 590, 625, 630, 670, 640, 695, 655, 675, 695, 660, 745, 625, 755, 595, 745, 590, 710, 570, 710, 535, 660]} />
      <P f={PURPLE} c={[700, 555, 730, 490, 815, 460, 830, 430, 885, 410, 840, 450, 850, 510, 870, 540, 830, 570, 770, 565, 715, 590]} />
      <P f={GREEN} c={[625, 590, 665, 580, 665, 630, 625, 625]} />
      <P f={GREEN} c={[655, 700, 680, 695, 705, 730, 735, 720, 680, 740, 670, 740]} />
      <P f="#7fb77a" c={[715, 495, 735, 500, 735, 535, 715, 530]} />
      <P f={GREEN} c={[835, 345, 875, 335, 905, 380, 950, 395, 915, 402, 860, 410, 840, 410]} />
      <P f={PURPLE} c={[835, 345, 905, 295, 930, 240, 985, 225, 990, 240, 965, 275, 1015, 340, 1065, 400, 1000, 410, 950, 395, 905, 380, 875, 335]} />
      <P f="#7fb77a" c={[910, 265, 935, 255, 915, 290]} />
      <P f={PURPLE} c={[795, 890, 845, 840, 855, 875, 885, 880, 880, 895, 840, 912]} />
      <P f={PURPLE} c={[840, 645, 860, 630, 880, 650, 870, 662]} />
      <P f={PURPLE} c={[880, 1310, 895, 1260, 920, 1265, 920, 1280, 945, 1270, 970, 1310, 930, 1310, 895, 1340]} />
    </g>
    <path d={speckles} fill="none" stroke="#ffffff" strokeOpacity="0.22" strokeWidth="1" />
    {/* national borders */}
    <g transform="translate(2000 140) scale(1.1735 1.046)" fill="none" stroke="#7f8788" strokeWidth="2.6" strokeLinejoin="round">
      <polyline points={pts([1065, 5, 1040, 50, 1020, 95, 1055, 120, 1020, 190, 995, 200, 980, 240, 935, 270, 935, 330, 950, 370, 990, 385, 995, 440, 980, 480, 1000, 490, 1040, 470, 1070, 440, 1095, 470, 1110, 490, 1150, 480, 1155, 495, 1195, 465, 1210, 495, 1280, 480, 1300, 495, 1345, 495, 1360, 545, 1440, 550, 1480, 630, 1520, 690, 1510, 720, 1530, 730, 1554, 720])} />
      <polyline points={pts([1205, 5, 1210, 70, 1275, 45, 1345, 55, 1335, 100, 1340, 150, 1420, 175, 1400, 240, 1415, 290, 1395, 315, 1340, 320, 1345, 370, 1295, 400, 1340, 450, 1345, 495])} />
      <polyline points={pts([1510, 860, 1530, 900, 1525, 935, 1554, 965])} />
    </g>
    {MAP_LABELS.map(([t, x, y, s, strong]) => (
      <text key={t} x={x} y={y} fontSize={s} textAnchor="middle" fill={strong ? "#4f5757" : "#667070"} stroke={BG} strokeWidth={3} paintOrder="stroke" fontFamily="Roboto, sans-serif">
        {t}
      </text>
    ))}
    {ON_LABELS.map(([t, x, y, s, c]) => (
      <text key={t} x={x} y={y} fontSize={s} textAnchor="middle" fill={c} fontFamily="Roboto, sans-serif">
        {t}
      </text>
    ))}
  </svg>
);

const MapPanel = () => (
  <div className="relative h-[1642px] shrink-0 overflow-hidden">
    <MapDrawing />
    <div className="absolute left-[33px] top-[32px] flex h-[47px] rounded-[3px] border-2 border-[#dcdcdc] overflow-hidden text-[27px] leading-[43px]">
      <span className="w-[130px] text-center bg-[#4096f8] text-white">Secteur</span>
      <span className="w-[162px] text-center bg-white text-[#595959]">Commune</span>
    </div>
    <div className="absolute right-[23px] top-[1437px] w-[62px] h-[118px] rounded-[8px] bg-white border-2 border-[#dfe3e5] flex flex-col text-[#333333]">
      <div className="h-[58px] flex items-center justify-center border-b border-[#dddddd]">
        <svg viewBox="0 0 24 24" className="w-[26px] h-[26px]"><path d="M10 2h4v8h8v4h-8v8h-4v-8H2v-4h8z" fill="#333333" /></svg>
      </div>
      <div className="flex-1 flex items-center justify-center">
        <svg viewBox="0 0 24 24" className="w-[26px] h-[26px]"><path d="M2 10h20v4H2z" fill="#333333" /></svg>
      </div>
    </div>
    <div className="absolute left-[15px] bottom-[14px] flex items-center gap-[2px]">
      <svg viewBox="0 0 40 40" className="w-[42px] h-[42px]">
        <circle cx="20" cy="20" r="17" fill="#d5dadd" stroke="#7b8285" strokeWidth="3" />
        <path d="M14 28V14a8 8 0 1 1 0 10" fill="none" stroke="#7b8285" strokeWidth="3" />
      </svg>
      <span className="text-[34px] leading-[40px] font-bold text-[#d5dadd] font-['Roboto',sans-serif] [-webkit-text-stroke:1.5px_#7b8285]">mapbox</span>
    </div>
    <div className="absolute right-0 bottom-0 h-[32px] pl-[10px] pr-[10px] bg-white/60 text-[24.5px] leading-[34px] text-[#333333] font-['Liberation_Sans',sans-serif] whitespace-nowrap">
      © Mapbox © OpenStreetMap <b>Improve this map</b> © Maxar
    </div>
  </div>
);

const HISTO = [157, 128, 99, 77, 64, 52, 32, 30, 24, 22, 19, 14, 9, 12, 10, 7, 10, 7, 8, 4, 3, 4, 3, 3, 43];

const Histogram = () => (
  <svg viewBox="387 1824 1579 210" className="w-[1579px] h-[210px] block mt-[10px] overflow-visible">
    <defs>
      <pattern id="hatch" width="9" height="9" patternUnits="userSpaceOnUse" patternTransform="rotate(25)">
        <rect width="9" height="9" fill="white" />
        <line x1="0" y1="0" x2="0" y2="9" stroke="#666666" strokeWidth="1.6" />
      </pattern>
    </defs>
    <g fontFamily="Liberation Sans, sans-serif" fontSize="19" fill="#595959">
      {[["300", 1846], ["200", 1894], ["100", 1943], ["0", 1991]].map(([t, y]) => (
        <g key={t}>
          <text x={444} y={Number(y) + 6} textAnchor="end">{t}</text>
          <line x1={450} x2={462} y1={y} y2={y} stroke="#595959" strokeWidth="1.5" />
        </g>
      ))}
      <text transform="translate(402 1920) rotate(-90)" textAnchor="middle" fontSize="17" fontFamily="DejaVu Sans, sans-serif" fill="#8c8c8c"># secteurs</text>
    </g>
    {HISTO.map((height, i) => {
      const x = 466 + i * 60.25;
      const top = 1991 - height;
      const hatched = i === 0 || i === 24;
      const band = Math.min(top + 9, 1988);
      return (
        <g key={i}>
          <rect x={x} y={top} width={55} height={height} fill={hatched ? "url(#hatch)" : "#4191f7"} />
          <rect x={x} y={top} width={55} height={1.5} fill={hatched ? "#888888" : "#7a8ea8"} />
          <rect x={x} y={band} width={55} height={2.5} fill={hatched ? "#777777" : "#2460a8"} />
        </g>
      );
    })}
    {[["<= 0 Wh", 493], ["1,2 GWh - 1,4 GWh", 794], ["2,4 GWh - 2,6 GWh", 1095], ["3,6 GWh - 3,9 GWh", 1396], ["4,8 GWh - 5,1 GWh", 1697]].map(([t, x]) => (
      <g key={t}>
        <line x1={x} x2={x} y1={1991} y2={2002} stroke="#595959" strokeWidth="1.5" />
        <text x={x} y={2024} textAnchor="middle" fontSize="20" fontFamily="Liberation Sans, sans-serif" fill="#595959">{t}</text>
      </g>
    ))}
  </svg>
);

const EvolutionBars = () => (
  <svg viewBox="387 2240 1579 40" className="w-[1579px] h-[40px] block mt-[7px]">
    <text x={444} y={2271} textAnchor="end" fontSize="19" fontFamily="Liberation Sans, sans-serif" fill="#595959">400</text>
    <line x1={450} x2={462} y1={2265} y2={2265} stroke="#595959" strokeWidth="1.5" />
    <rect x={1040} y={2254} width={64} height={30} fill="#4191f7" />
    <rect x={1040} y={2254} width={64} height={1.5} fill="#7a8ea8" />
    <rect x={1040} y={2263} width={64} height={2.5} fill="#2460a8" />
  </svg>
);

const smooth = (p: number[][]) => {
  let d = `M${p[0][0]} ${p[0][1]}`;
  for (let i = 0; i < p.length - 1; i++) {
    const a = p[Math.max(i - 1, 0)];
    const b = p[i];
    const c = p[i + 1];
    const e = p[Math.min(i + 2, p.length - 1)];
    d += `C${b[0] + (c[0] - a[0]) / 6} ${b[1] + (c[1] - a[1]) / 6} ${c[0] - (e[0] - b[0]) / 6} ${c[1] - (e[1] - b[1]) / 6} ${c[0]} ${c[1]}`;
  }
  return d;
};

const LINE = [[2068, 1996], [2188, 1986], [2317, 1984], [2444, 1990], [2570, 1978], [2696, 1984], [2821, 1984], [2946, 1984], [3071, 1990], [3198, 1998], [3324, 1987]];
const FORECAST = [[3324, 1987], [3449, 1989], [3575, 1991], [3700, 2000]];

const BillingChart = () => {
  const gridY: [string, number][] = [["3 tWh", 1994], ["2,5 tWh", 2030], ["2 tWh", 2066], ["1,5 tWh", 2102], ["1 tWh", 2136], ["500 GWh", 2172], ["0 Wh", 2208]];
  const line = smooth(LINE);
  return (
    <svg viewBox="2003 1960 1821 290" className="w-[1821px] h-[290px] block mt-[12px] -ml-[25px]">
      <path d={`${line}L3324 2208L2068 2208Z`} fill="#d6e8fd" />
      {gridY.map(([t, y]) => (
        <g key={t}>
          <line x1={2068} x2={3699} y1={y} y2={y} stroke="#cfcfcf" strokeWidth="2" strokeDasharray="2 2" />
          <text x={3707} y={y + 6} fontSize="19" fontFamily="Liberation Sans, sans-serif" fill="#bfbfbf">{t}</text>
        </g>
      ))}
      {[...Array(14)].map((_, i) => {
        const x = 2068 + i * 125.5;
        return <line key={i} x1={x} x2={x} y1={2208} y2={2220} stroke="#d9d9d9" strokeWidth="1.5" />;
      })}
      {[2012, 2014, 2016, 2018, 2020, 2022, 2024].map((y, i) => (
        <text key={y} x={2194 + i * 251} y={2241} textAnchor="middle" fontSize="20" fontFamily="Liberation Sans, sans-serif" fill="#bfbfbf">{y}</text>
      ))}
      <path d={line} fill="none" stroke="#4191f7" strokeWidth="5" />
      <path d={smooth(FORECAST)} fill="none" stroke="#4191f7" strokeWidth="5" strokeDasharray="4 5" />
    </svg>
  );
};

const BillingPanel = () => (
  <div className="flex-1 bg-white pl-[25px] pt-[34px] overflow-hidden">
    <div className="text-[32px] leading-[36px] text-[#262626]">Évolution de la facturation et prédiction pour la sélection courante</div>
    <div className="mt-[20px] pr-[25px] flex items-center justify-between">
      <div className="flex h-[64px] text-[27px] leading-[60px] text-[#595959]">
        <span className="w-[224px] text-center border-2 border-[#4096f8] text-[#4096f8] rounded-l-[2px]">Tous usages</span>
        <span className="w-[203px] text-center border-y-2 border-r-2 border-[#d9d9d9]">Résidentiel</span>
        <span className="w-[165px] text-center border-y-2 border-r-2 border-[#d9d9d9]">Protégé</span>
        <span className="w-[257px] text-center border-y-2 border-r-2 border-[#d9d9d9] rounded-r-[2px]">Non résidentiel</span>
      </div>
      <AiOutlineDownload size={32} className="text-[#4096f8]" />
    </div>
    <BillingChart />
  </div>
);

const FiltersPanel = () => (
  <section className="w-[1820px] shrink-0 bg-white overflow-hidden pl-[32px] pr-[30px]">
    <h1 className="pt-[40px] text-[39.7px] leading-[48px] text-[#262626] tabular-nums">Nombre de Secteurs: 1 980</h1>
    <div className="mt-[42px] flex items-center text-[22.4px] leading-[30px] text-[#595959]">
      <span>Mise à jour du cache aujourd'hui</span>
      <AiOutlineReload size={30} className="ml-[14px] text-[#4096f8]" />
    </div>
    <div className="mt-[55px] h-[2px] bg-[#f0f0f0]" />
    <div className="mt-[50px] h-[90px] flex items-center border-b-[3px] border-[#f0f0f0] text-[27.5px] text-[#595959]">
      <div className="relative h-[90px] w-[142px] flex items-center gap-[31px] text-[#4096f8]">
        <AiOutlineBarChart size={30} />
        <span>Filtres</span>
        <span className="absolute left-0 right-0 bottom-[-3px] h-[4px] bg-[#4096f8]" />
      </div>
      <div className="ml-[64px] flex items-center gap-[30px]">
        <AiOutlineDotChart size={30} />
        <span>Relations</span>
      </div>
      <div className="ml-[64px] flex items-center gap-[29px]">
        <AiOutlineUnorderedList size={30} />
        <span>Liste</span>
      </div>
      <div className="ml-auto flex items-center gap-[16px] pr-[10px]">
        <AiOutlineDownload size={32} className="text-[#4096f8]" />
        <div className="w-[46px] h-[46px] rounded-full border-2 border-[#d9d9d9] flex items-center justify-center text-[#595959]">
          <AiOutlineFunnelPlot size={28} />
        </div>
      </div>
    </div>

    <div className="flex">
      <Stepper />
      <div className="flex-1 min-w-0">
        <h2 className="mt-[42px] text-[39.5px] leading-[48px] text-[#262626]">Types d'énergies</h2>
        <div className="mt-[29px] h-[64px] flex items-start justify-between">
          <h3 className="text-[32px] leading-[54px] text-[#262626]">Énergie(s) livrée(s) par RESA</h3>
          <PaintButton active />
        </div>
        <p className="mt-[5px] text-[23.6px] leading-[30px] text-[#262626]">Types d'énergie(s) livrées(s) par RESA</p>
        <div className="mt-[14px]">
          <BarRows
            rows={[
              { label: "Électricité et gaz", count: "955", pct: "48,2%", width: 545, color: "bg-[#6144ae]" },
              { label: "Électricité seulement", count: "738", pct: "37,3%", width: 421, color: "bg-[#68ac5e]" },
              { label: "Gaz seulement", count: "287", pct: "14,5%", width: 164, color: "bg-[#f5c242]" },
            ]}
          />
        </div>
        <div className="mt-[60px] h-[2px] bg-[#f0f0f0]" />

        <h2 className="mt-[163px] text-[39.5px] leading-[48px] text-[#262626]">Électricité</h2>
        <div className="mt-[28px] h-[64px] flex items-start justify-between">
          <h3 className="text-[32px] leading-[54px] text-[#262626]">Est connecté à l'électricité</h3>
          <PaintButton />
        </div>
        <p className="mt-[5px] text-[23.6px] leading-[30px] text-[#262626]">Est connecté à l'électricité via le réseau RESA</p>
        <div className="mt-[16px]">
          <BarRows
            rows={[
              { label: "Oui", count: "1 693", pct: "85,5%", width: 545, color: "bg-[#4191f7]" },
              { label: "Non", count: "287", pct: "14,5%", width: 92, color: "bg-[#4191f7]" },
            ]}
          />
        </div>
        <div className="mt-[60px] h-[2px] bg-[#f0f0f0]" />

        <div className="relative mt-[209px] pl-[80px]">
          <AiOutlineDown size={24} className="absolute left-[32px] top-[25px] text-[#262626]" />
          <h2 className="text-[40px] leading-[48px] text-[#262626]">Consommation</h2>
          <div className="mt-[31px] h-[64px] flex items-start justify-between">
            <h3 className="text-[32px] leading-[54px] text-[#262626]">Consommation totale (dernière année)</h3>
            <PaintButton />
          </div>
          <p className="mt-[5px] text-[23.6px] leading-[30px] text-[#262626]">Consommation extrapolée (kWh) pour la dernière année au sein du secteur / la commune.</p>
          <Histogram />
          <div className="mt-[95px] h-[2px] bg-[#f0f0f0]" />
          <div className="mt-[4px] h-[64px] flex items-start justify-between">
            <h3 className="text-[32px] leading-[54px] text-[#262626]">Évolution de la consommation totale</h3>
            <PaintButton />
          </div>
          <p className="mt-[4px] text-[23.6px] leading-[30px] text-[#262626]">Évolution de la consommation électrique totale (%) au cours des 3 dernières années.</p>
          <EvolutionBars />
        </div>
      </div>
    </div>
  </section>
);

export default function App() {
  return (
    <div className="flex w-[3840px] h-[2296px] overflow-hidden bg-[#f3f6f7] font-['Inter','Noto_Sans',sans-serif]">
      <Sidebar />
      <div className="flex-1 min-w-0 flex flex-col">
        <Header />
        <main className="h-[2168px] pt-[16px] pb-[16px] pl-[16px] pr-[16px] flex">
          <FiltersPanel />
          <div className="w-[7px] shrink-0 bg-[#cccccc]" />
          <div className="w-[1821px] flex flex-col">
            <MapPanel />
            <div className="h-[8px] shrink-0 bg-[#cccccc]" />
            <BillingPanel />
          </div>
        </main>
      </div>
    </div>
  );
}
